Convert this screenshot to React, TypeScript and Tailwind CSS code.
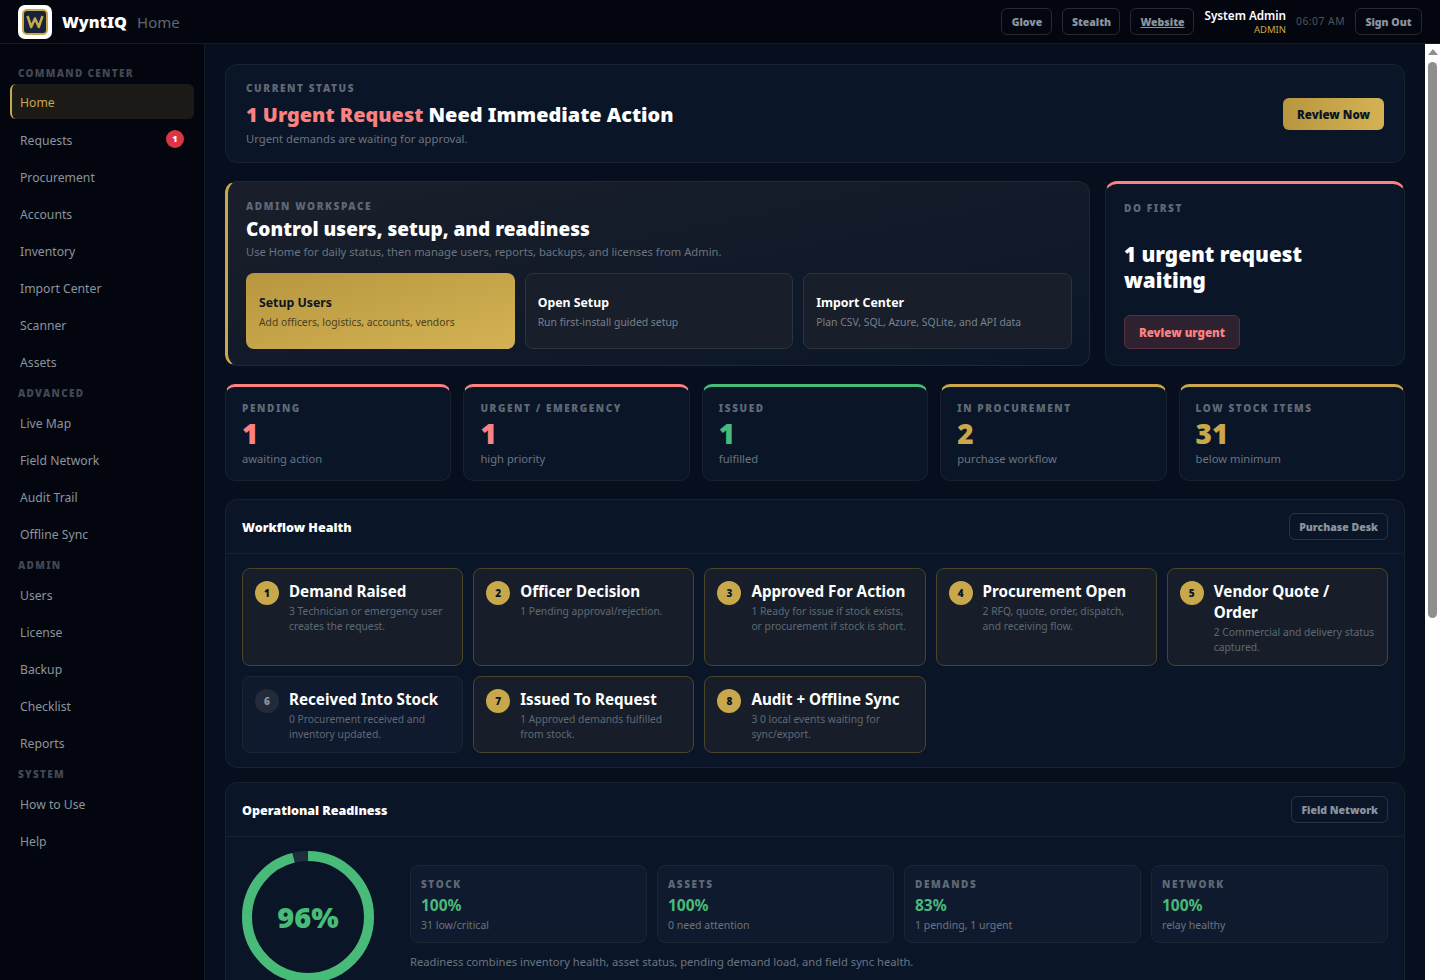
import React from "react";

const FONT = "font-['Noto_Sans',sans-serif]";

const navGroups = [
  { title: "COMMAND CENTER", items: ["Home", "Requests", "Procurement", "Accounts", "Inventory", "Import Center", "Scanner", "Assets"] },
  { title: "ADVANCED", items: ["Live Map", "Field Network", "Audit Trail", "Offline Sync"] },
  { title: "ADMIN", items: ["Users", "License", "Backup", "Checklist", "Reports"] },
  { title: "SYSTEM", items: ["How to Use", "Help"] },
];

const stats = [
  { label: "PENDING", value: "1", sub: "awaiting action", bar: "border-t-[#fc8181]", text: "text-[#fc8181]" },
  { label: "URGENT / EMERGENCY", value: "1", sub: "high priority", bar: "border-t-[#fc8181]", text: "text-[#fc8181]" },
  { label: "ISSUED", value: "1", sub: "fulfilled", bar: "border-t-[#48bb78]", text: "text-[#48bb78]" },
  { label: "IN PROCUREMENT", value: "2", sub: "purchase workflow", bar: "border-t-[#c9a84c]", text: "text-[#c9a84c]" },
  { label: "LOW STOCK ITEMS", value: "31", sub: "below minimum", bar: "border-t-[#c9a84c]", text: "text-[#c9a84c]" },
];

// line breaks kept as in the design
const steps = [
  { n: 1, title: "Demand Raised", desc: "3 Technician or emergency user\ncreates the request.", on: true },
  { n: 2, title: "Officer Decision", desc: "1 Pending approval/rejection.", on: true },
  { n: 3, title: "Approved For Action", desc: "1 Ready for issue if stock exists,\nor procurement if stock is short.", on: true },
  { n: 4, title: "Procurement Open", desc: "2 RFQ, quote, order, dispatch,\nand receiving flow.", on: true },
  { n: 5, title: "Vendor Quote / Order", desc: "2 Commercial and delivery status\ncaptured.", on: true },
  { n: 6, title: "Received Into Stock", desc: "0 Procurement received and\ninventory updated.", on: false },
  { n: 7, title: "Issued To Request", desc: "1 Approved demands fulfilled\nfrom stock.", on: true },
  { n: 8, title: "Audit + Offline Sync", desc: "3 0 local events waiting for\nsync/export.", on: true },
];

const readiness = [
  { label: "STOCK", value: "100%", sub: "31 low/critical" },
  { label: "ASSETS", value: "100%", sub: "0 need attention" },
  { label: "DEMANDS", value: "83%", sub: "1 pending, 1 urgent" },
  { label: "NETWORK", value: "100%", sub: "relay healthy" },
];

const HeaderButton = ({ children, className }: { children: React.ReactNode; className: string }) => (
  <button className={`h-[27px] pt-[2px] rounded-md border border-[#262a30] text-[10.5px] font-black text-[#8b949e] ${className}`}>
    {children}
  </button>
);

const Logo = () => (
  <div className="w-[34px] h-[34px] rounded-[7px] bg-white p-[4px]">
    <div className="w-full h-full rounded-[5px] border-2 border-[#c9a84c] bg-[#16233a] flex items-center justify-center">
      <svg width="18" height="15" viewBox="0 0 18 15" fill="none">
        <path d="M1.5 2 L5.2 13 L9 4.5 L12.8 13 L16.5 2" stroke="#c9a84c" strokeWidth="2.5" strokeLinejoin="round" />
      </svg>
    </div>
  </div>
);

const Sidebar = () => (
  <aside className="w-[205px] shrink-0 h-full bg-[#03060f] border-r border-[#141a24] pt-[23px] overflow-hidden">
    {navGroups.map((g, gi) => (
      <div key={g.title} className={gi === 0 ? "" : "mt-[7px]"}>
        <div className="pl-[18px] mb-[5px] text-[10px] leading-[12px] font-black tracking-[1.3px] text-[#414853]">{g.title}</div>
        <div className="px-[10px]">
          {g.items.map((item) =>
            item === "Home" ? (
              <div key={item} className="h-[35px] mb-[2px] pt-[4px] rounded-md border-l-2 border-[#c9a84c] bg-[#1b1a17] pl-[8px] flex items-center text-[12.2px] text-[#c9a84c]">
                {item}
              </div>
            ) : (
              <div key={item} className="h-[37px] pt-[4px] px-[10px] flex items-center justify-between text-[12.2px] text-[#8b949e]">
                {item}
                {item === "Requests" && (
                  <span className="mb-[6px] w-[18px] h-[18px] rounded-full bg-[#dc3545] text-white text-[9px] font-black flex items-center justify-center">1</span>
                )}
              </div>
            )
          )}
        </div>
      </div>
    ))}
  </aside>
);

const Eyebrow = ({ children }: { children: React.ReactNode }) => (
  <div className="text-[10px] leading-[12px] font-black tracking-[1.6px] text-[#5f6975]">{children}</div>
);

const SectionHead = ({ title, action }: { title: string; action: string }) => (
  <div className="h-[54px] px-4 flex items-center justify-between border-b border-[#16202e]">
    <div className="pt-[3px] text-[12.5px] font-black text-white">{title}</div>
    <button className="h-[27px] px-[9px] pt-[2px] rounded-md border border-[#2a3340] text-[10.5px] font-black text-[#8b949e]">{action}</button>
  </div>
);

// the reference shows the browser's classic scrollbar, headless chrome doesn't draw one
const FakeScrollbar = () => (
  <div className="w-[15px] shrink-0 h-full bg-white flex flex-col items-center">
    <svg width="10" height="6" viewBox="0 0 10 6" className="mt-[5px]">
      <path d="M5 0 L10 6 L0 6 Z" fill="#8f8f8f" />
    </svg>
    <div className="mt-[7px] w-[9px] h-[556px] rounded-[5px] bg-[#8f8f8f]" />
  </div>
);

export default function App() {
  return (
    <div className={`h-screen flex flex-col overflow-hidden bg-[#070e1e] ${FONT}`}>
      <header className="h-[44px] shrink-0 bg-[#03060f] border-b border-[#141a24] flex items-center pl-[18px] pr-[18px]">
        <Logo />
        <div className="ml-[10px] pt-[2px] text-[16.2px] font-black text-white">WyntIQ</div>
        <div className="ml-[10px] pt-[2px] text-[15px] text-[#5f6670]">Home</div>
        <div className="ml-auto flex items-center">
          <div className="flex gap-[10px]">
            <HeaderButton className="w-[51px]">Glove</HeaderButton>
            <HeaderButton className="w-[58px]">Stealth</HeaderButton>
            <HeaderButton className="w-[64px] underline">Website</HeaderButton>
          </div>
          <div className="ml-[10px] text-right">
            <div className="text-[11.7px] leading-[15px] font-semibold text-white">System Admin</div>
            <div className="text-[9.5px] leading-[13px] text-[#c9a84c]">ADMIN</div>
          </div>
          <div className="ml-[10px] text-[10.3px] tracking-[0.5px] text-[#4d545e]">06:07 AM</div>
          <div className="ml-[10px]"><HeaderButton className="w-[67px]">Sign Out</HeaderButton></div>
        </div>
      </header>

      <div className="flex-1 min-h-0 flex">
        <Sidebar />
        <main className="flex-1 min-w-0 overflow-y-auto px-5 pt-5 pb-5 flex flex-col gap-[18px]">
          <section className="shrink-0 h-[99px] rounded-xl border border-[#18222f] bg-[#0a1628] px-5 flex justify-between">
            <div className="pt-[17px]">
              <Eyebrow>CURRENT STATUS</Eyebrow>
              <div className="mt-[6px] text-[19.9px] leading-[30px] font-black text-white">
                <span className="text-[#fc8181]">1 Urgent Request</span> Need Immediate Action
              </div>
              <div className="text-[11.25px] leading-[18px] text-[#6b7480]">Urgent demands are waiting for approval.</div>
            </div>
            <button className="self-center h-8 w-[101px] pt-[2px] rounded-md bg-gradient-to-r from-[#b8963e] to-[#d4b254] text-[11.5px] font-black text-[#0a1628]">Review Now</button>
          </section>

          <div className="shrink-0 flex gap-[15px] h-[185px]">
            <section className="flex-1 min-w-0 rounded-xl border border-[#222831] border-l-[3px] border-l-[#c9a84c] bg-gradient-to-br from-[#1a1f2a] to-[#0a1628] pl-[18px] pr-[17px] pt-[18px]">
              <Eyebrow>ADMIN WORKSPACE</Eyebrow>
              <div className="mt-[4px] text-[19px] leading-[26px] font-black text-white">Control users, setup, and readiness</div>
              <div className="mt-[1px] text-[11.2px] leading-[18px] text-[#6b7480]">Use Home for daily status, then manage users, reports, backups, and licenses from Admin.</div>
              <div className="mt-3 grid grid-cols-3 gap-[10px]">
                <div className="h-[76px] pt-[2px] rounded-lg bg-gradient-to-br from-[#b8963e] to-[#d4b254] px-[13px] flex flex-col justify-center">
                  <div className="text-[12.3px] leading-[18px] font-bold text-[#0a1628]">Setup Users</div>
                  <div className="mt-[3px] text-[10.3px] leading-[15px] text-[#4a3f20]">Add officers, logistics, accounts, vendors</div>
                </div>
                <div className="h-[76px] pt-[2px] rounded-lg border border-[#2a3340] bg-[#181e2a] px-[12px] flex flex-col justify-center">
                  <div className="text-[12.3px] leading-[18px] font-bold text-white">Open Setup</div>
                  <div className="mt-[3px] text-[10.4px] leading-[15px] text-[#79818c]">Run first-install guided setup</div>
                </div>
                <div className="h-[76px] pt-[2px] rounded-lg border border-[#2a3340] bg-[#181e2a] px-[12px] flex flex-col justify-center">
                  <div className="text-[12.3px] leading-[18px] font-bold text-white">Import Center</div>
                  <div className="mt-[3px] text-[10.4px] leading-[15px] text-[#79818c]">Plan CSV, SQL, Azure, SQLite, and API data</div>
                </div>
              </div>
            </section>
            <section className="w-[300px] shrink-0 rounded-xl border border-[#18222f] border-t-[3px] border-t-[#fc8181] bg-[#0a1628] px-[18px] pt-[18px]">
              <Eyebrow>DO FIRST</Eyebrow>
              <div className="mt-[27px] text-[20.7px] leading-[26px] font-black text-white">1 urgent request waiting</div>
              <button className="mt-[22px] h-[34px] w-[116px] pt-[2px] rounded-md border border-[#5a3040] bg-[#2f2230] text-[11.5px] font-black text-[#fc8181]">Review urgent</button>
            </section>
          </div>

          <div className="shrink-0 grid grid-cols-5 gap-3">
            {stats.map((s) => (
              <div key={s.label} className={`h-[97px] rounded-[10px] border border-[#18222f] border-t-[3px] ${s.bar} bg-[#0a1628] px-4 pt-[15px]`}>
                <Eyebrow>{s.label}</Eyebrow>
                <div className={`mt-[2px] text-[28px] leading-[34px] font-black ${s.text}`}>{s.value}</div>
                <div className="text-[11.2px] leading-[18px] text-[#6b7480]">{s.sub}</div>
              </div>
            ))}
          </div>

          <section className="shrink-0 rounded-xl border border-[#18222f] bg-[#0a1628]">
            <SectionHead title="Workflow Health" action="Purchase Desk" />
            <div className="px-4 pt-[14px] pb-[14px] grid grid-cols-5 gap-[10px]">
              {steps.map((s) => (
                <div key={s.n} className={`rounded-lg border pt-3 pl-3 pr-[13px] pb-[10px] flex gap-[10px] ${s.on ? "border-[#4a4429] bg-[#171e29]" : "border-[#1b2534] bg-[#101a2e]"}`}>
                  <div className={`w-6 h-6 shrink-0 rounded-full flex items-center justify-center text-[10px] font-black ${s.on ? "bg-[#c9a84c] text-[#0a1628]" : "bg-[#232b3a] text-[#8b949e]"}`}>{s.n}</div>
                  <div className="min-w-0">
                    <div className="text-[15.2px] leading-[21px] font-bold text-white">{s.title}</div>
                    <div className="mt-[2px] text-[10.3px] leading-[15px] whitespace-pre text-[#5f6975]">{s.desc}</div>
                  </div>
                </div>
              ))}
            </div>
          </section>

          <section className="shrink-0 -mt-[4px] rounded-xl border border-[#18222f] bg-[#0a1628]">
            <SectionHead title="Operational Readiness" action="Field Network" />
            <div className="px-4 pt-[14px] pb-4 flex items-start gap-9">
              <div className="relative w-[132px] h-[132px] shrink-0">
                <svg viewBox="0 0 132 132" className="w-full h-full -rotate-90">
                  <circle cx="66" cy="66" r="61" fill="none" stroke="#1e2d3d" strokeWidth="10" />
                  <circle cx="66" cy="66" r="61" fill="none" stroke="#48bb78" strokeWidth="10" strokeDasharray="368 383" />
                </svg>
                <div className="absolute inset-0 flex items-center justify-center text-[29px] font-black text-[#48bb78]">96%</div>
              </div>
              <div className="flex-1 min-w-0 mt-[14px]">
                <div className="grid grid-cols-4 gap-[10px]">
                  {readiness.map((r) => (
                    <div key={r.label} className="h-[78px] rounded-lg border border-[#1b2534] bg-[#101a2e] px-[10px] pt-3">
                      <Eyebrow>{r.label}</Eyebrow>
                      <div className="mt-[3px] text-[15.5px] leading-[24px] font-bold text-[#48bb78]">{r.value}</div>
                      <div className="mt-[1px] text-[10.5px] leading-[15px] text-[#6b7480]">{r.sub}</div>
                    </div>
                  ))}
                </div>
                <div className="mt-[10px] text-[11.2px] leading-[18px] text-[#6b7480]">
                  Readiness combines inventory health, asset status, pending demand load, and field sync health.
                </div>
              </div>
            </div>
          </section>
        </main>
        <FakeScrollbar />
      </div>
    </div>
  );
}
